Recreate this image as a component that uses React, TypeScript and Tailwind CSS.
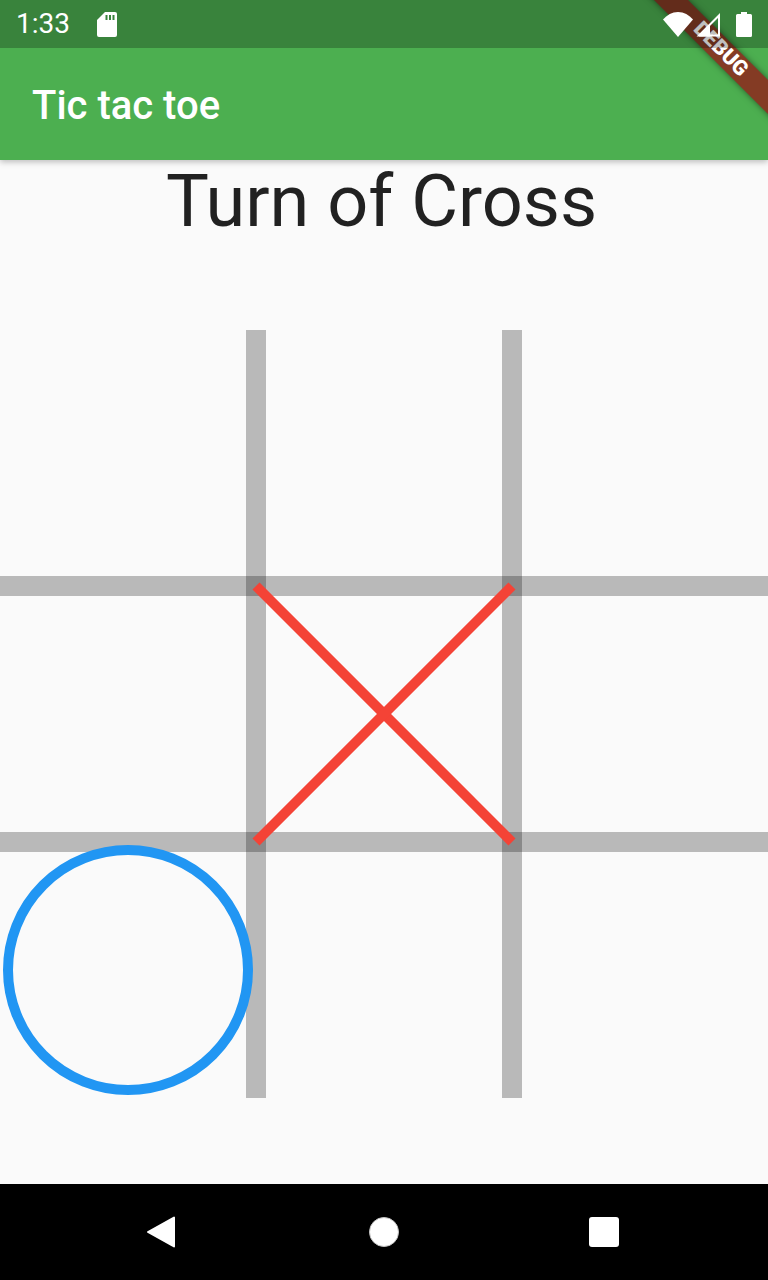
export default function App() {
  return (
    <div className="relative flex h-[1280px] w-[768px] flex-col overflow-hidden bg-[#fafafa] font-['Roboto',sans-serif]">
      <header className="shrink-0 bg-[#4caf50] shadow-[0_2px_6px_rgba(0,0,0,0.25)]">
        {/* status bar: translucent scrim that sits above the debug ribbon */}
        <div className="relative z-30 flex h-12 items-center justify-between bg-black/25 px-4 text-white">
          <div className="flex items-center">
            <span className="text-[28px] leading-none">1:33</span>
            <svg width="20" height="25" viewBox="0 0 20 25" className="ml-[27px]">
              <path
                fill="#fff"
                fillRule="evenodd"
                d="M8 0h10a2 2 0 0 1 2 2v21a2 2 0 0 1-2 2H2a2 2 0 0 1-2-2V8zM8.500 3v5h2V3zM12 3v5h2V3zM15.500 3v5h2V3z"
              />
            </svg>
          </div>
          <div className="flex items-center">
            <svg width="30" height="25" viewBox="0 0 30 25">
              <path fill="#fff" d="M15 25 0 7.500C4 3 9 0 15 0s11 3 15 7.500z" />
            </svg>
            <svg width="25" height="25" viewBox="0 0 25 25" className="ml-[3px]">
              <path fill="none" stroke="#fff" strokeWidth="2" d="M23 3.500V23.500H3z" />
              <path fill="#fff" d="M3 23.500 14 13v11.500H3z" />
            </svg>
            <svg width="16" height="25" viewBox="0 0 16 25" className="ml-[15px]">
              <path fill="#fff" d="M5 0h6v2h3.500A1.500 1.500 0 0 1 16 3.500V23.500a1.500 1.500 0 0 1-1.500 1.500H1.500A1.500 1.500 0 0 1 0 23.500V3.500A1.500 1.500 0 0 1 1.500 2H5z" />
            </svg>
          </div>
        </div>

        {/* app bar */}
        <div className="flex h-28 items-center px-8 pt-1">
          <h1 className="text-[40px] font-medium leading-none text-white">Tic tac toe</h1>
        </div>
      </header>

      {/* game */}
      <main className="flex flex-1 flex-col">
        <h2 className="h-[84px] pr-[5px] text-center text-[72px] font-normal leading-[84px] text-black/[0.87]">
          Turn of Cross
        </h2>
        <svg width="768" height="768" viewBox="0 0 768 768" className="mt-[86px] block">
          <g fill="#000" fillOpacity="0.26">
            <rect x="246" y="0" width="20" height="768" />
            <rect x="502" y="0" width="20" height="768" />
            <rect x="0" y="246" width="768" height="20" />
            <rect x="0" y="502" width="768" height="20" />
          </g>
          <g stroke="#f44336" strokeWidth="10">
            <line x1="256" y1="256" x2="512" y2="512" />
            <line x1="512" y1="256" x2="256" y2="512" />
          </g>
          <circle cx="128" cy="640" r="120" fill="none" stroke="#2196f3" strokeWidth="10" />
        </svg>
      </main>

      {/* nav bar */}
      <nav className="flex h-24 shrink-0 items-center bg-black pl-[147px]">
        <svg width="28" height="32" viewBox="0 0 28 32">
          <path fill="#fff" stroke="#fff" strokeWidth="2" strokeLinejoin="round" d="M27 1.500V30.500L1 16z" />
        </svg>
        <div className="ml-[194px] h-[30px] w-[30px] rounded-full border border-[#c4c4c4] bg-white" />
        <div className="ml-[190px] h-[30px] w-[30px] rounded-[3px] bg-white" />
      </nav>

      {/* debug ribbon */}
      <div className="pointer-events-none absolute right-0 top-0 z-20 h-[130px] w-[130px] overflow-hidden">
        <div className="absolute left-[-24px] top-[41px] flex h-6 w-[220px] rotate-45 items-center justify-center bg-[#843b24] text-[21px] font-black leading-none text-white shadow-[0_0_6px_rgba(0,0,0,0.5)]">
          <span className="-translate-x-[5px] -translate-y-[1px]">DEBUG</span>
        </div>
      </div>
    </div>
  );
}
